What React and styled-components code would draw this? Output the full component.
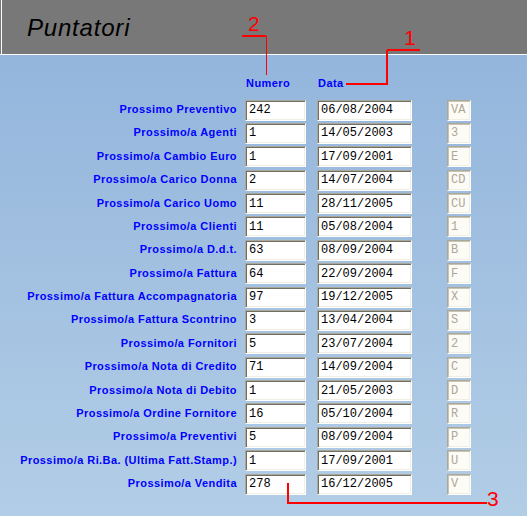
import React from "react";
import styled, { createGlobalStyle } from "styled-components";

const Global = createGlobalStyle`
  html, body { margin: 0; padding: 0; }
  body { width: 527px; height: 516px; overflow: hidden; }
`;

const Page = styled.div`
  position: relative;
  width: 527px;
  height: 516px;
  background: linear-gradient(to bottom, #90b3db 0%, #b2cde6 100%);
  font-family: "Liberation Sans", Arial, sans-serif;
`;

const Header = styled.div`
  height: 54px;
  background: #787878;
  border-bottom: 1px solid #ffffff;
  box-shadow: inset 1px 0 0 #787878, inset 2px 0 0 #ffffff;
  display: flex;
  align-items: center;
  padding-left: 27px;
`;

const Title = styled.h1`
  margin: 0;
  margin-top: 2px;
  font-family: "Liberation Sans", Arial, sans-serif;
  font-style: italic;
  font-weight: normal;
  font-size: 24px;
  letter-spacing: 0.8px;
  color: #000;
  -webkit-font-smoothing: none;
`;

const ColHeads = styled.div`
  display: flex;
  margin-top: 21px;
  height: 14px;
  align-items: center;
`;

const Head = styled.span`
  margin-left: ${(p) => p.$ml}px;
  width: ${(p) => p.$w}px;
  color: #0000ff;
  font-weight: bold;
  font-size: 11px;
  letter-spacing: 0.45px;
`;

const Rows = styled.div`
  margin-top: 9.5px;
  display: grid;
  grid-auto-rows: 21px;
  row-gap: 2.375px;
`;

const Row = styled.div`
  display: flex;
  align-items: center;
`;

const Label = styled.span`
  width: 237px;
  text-align: right;
  color: #0000ff;
  font-weight: bold;
  font-size: 11px;
  letter-spacing: 0.43px;
  white-space: nowrap;
  padding-bottom: 2px;
`;

const Field = styled.div`
  box-sizing: border-box;
  margin-left: ${(p) => p.$ml}px;
  width: ${(p) => p.$w}px;
  height: 21px;
  background: ${(p) => (p.$disabled ? "#fcfbf6" : "#ffffff")};
  border-top: 1px solid #aca899;
  border-left: 1px solid #aca899;
  border-bottom: 1px solid #ffffff;
  border-right: 1px solid #ffffff;
  box-shadow: ${(p) =>
    p.$disabled
      ? "inset 1px 1px 0 #c8c4b4, inset -1px -1px 0 #f1efe2"
      : "inset 1px 1px 0 #716f64, inset -1px -1px 0 #f1efe2"};
  display: flex;
  align-items: center;
  padding-left: 3px;
  font-family: "Liberation Mono", "Courier New", monospace;
  font-size: 12px;
  color: ${(p) => (p.$disabled ? "#aca899" : "#000000")};
  -webkit-font-smoothing: none;
`;

const Overlay = styled.svg`
  position: absolute;
  left: 0;
  top: 0;
  pointer-events: none;
`;

const data = [
  ["Prossimo Preventivo", "242", "06/08/2004", "VA"],
  ["Prossimo/a Agenti", "1", "14/05/2003", "3"],
  ["Prossimo/a Cambio Euro", "1", "17/09/2001", "E"],
  ["Prossimo/a Carico Donna", "2", "14/07/2004", "CD"],
  ["Prossimo/a Carico Uomo", "11", "28/11/2005", "CU"],
  ["Prossimo/a Clienti", "11", "05/08/2004", "1"],
  ["Prossimo/a D.d.t.", "63", "08/09/2004", "B"],
  ["Prossimo/a Fattura", "64", "22/09/2004", "F"],
  ["Prossimo/a Fattura Accompagnatoria", "97", "19/12/2005", "X"],
  ["Prossimo/a Fattura Scontrino", "3", "13/04/2004", "S"],
  ["Prossimo/a Fornitori", "5", "23/07/2004", "2"],
  ["Prossimo/a Nota di Credito", "71", "14/09/2004", "C"],
  ["Prossimo/a Nota di Debito", "1", "21/05/2003", "D"],
  ["Prossimo/a Ordine Fornitore", "16", "05/10/2004", "R"],
  ["Prossimo/a Preventivi", "5", "08/09/2004", "P"],
  ["Prossimo/a Ri.Ba. (Ultima Fatt.Stamp.)", "1", "17/09/2001", "U"],
  ["Prossimo/a Vendita", "278", "16/12/2005", "V"],
];

export default function App() {
  return (
    <Page>
      <Global />
      <Header>
        <Title>Puntatori</Title>
      </Header>
      <ColHeads>
        <Head $ml={246} $w={60}>Numero</Head>
        <Head $ml={12} $w={60}>Data</Head>
      </ColHeads>
      <Rows>
        {data.map(([label, num, date, code]) => (
          <Row key={label}>
            <Label>{label}</Label>
            <Field $ml={8} $w={61}>{num}</Field>
            <Field $ml={11} $w={95}>{date}</Field>
            <Field $ml={35} $w={24} $disabled>{code}</Field>
          </Row>
        ))}
      </Rows>
      <Overlay width="527" height="516" viewBox="0 0 527 516">
        <g fill="none" stroke="#ff0000" shapeRendering="crispEdges">
          <path d="M242 36 H266" strokeWidth="2" />
          <path d="M266.5 36 V75" strokeWidth="1" />
          <path d="M387 50 H420" strokeWidth="2" />
          <path d="M387 50 V84" strokeWidth="2" />
          <path d="M346 84 H388" strokeWidth="2" />
          <path d="M288 483 V504" strokeWidth="2" />
          <path d="M287 503 H487" strokeWidth="2" />
        </g>
        <g fill="#ff0000" fontFamily="Liberation Sans, Arial, sans-serif" fontSize="21">
          <text x="248" y="31">2</text>
          <text x="404" y="45">1</text>
          <text x="487" y="506">3</text>
        </g>
      </Overlay>
    </Page>
  );
}
